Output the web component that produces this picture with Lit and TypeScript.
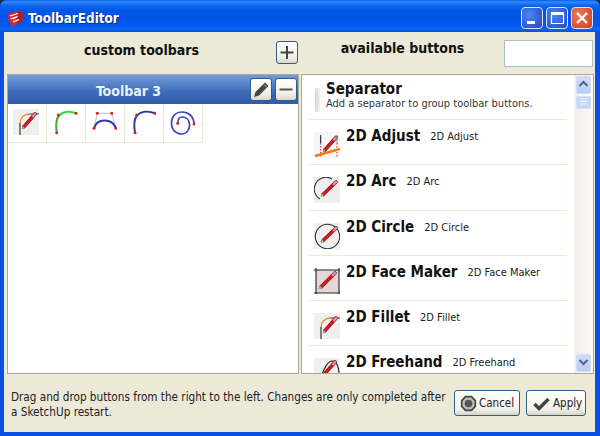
import { LitElement, html, css, svg } from 'lit';
import { customElement } from 'lit/decorators.js';

// pencil drawn from the tip (x1,y1) to the eraser end (x2,y2)
const pencil = (x1: number, y1: number, x2: number, y2: number) => {
  const mx = x1 + (x2 - x1) * 0.14;
  const my = y1 + (y2 - y1) * 0.14;
  const ex = x1 + (x2 - x1) * 0.86;
  const ey = y1 + (y2 - y1) * 0.86;
  return svg`
    <line x1=${mx} y1=${my} x2=${x2} y2=${y2} stroke="#6b2a2a" stroke-width="3.7" stroke-linecap="round" />
    <line x1=${mx} y1=${my} x2=${ex} y2=${ey} stroke="#e0141e" stroke-width="2.5" />
    <line x1=${ex} y1=${ey} x2=${x2} y2=${y2} stroke="#e58ab0" stroke-width="2.5" stroke-linecap="round" />
    <line x1=${x1} y1=${y1} x2=${mx} y2=${my} stroke="#b9b06a" stroke-width="1.8" />
  `;
};

const tile = (fill = '#efefef') => svg`<rect width="26" height="26" fill=${fill} />`;
const dot = (x: number, y: number) => svg`<circle cx=${x} cy=${y} r="1.5" fill="#d81e2a" />`;

const icon = (body: unknown) => html`<svg class="icon" viewBox="0 0 26 26">${body}</svg>`;

const filletIcon = () => svg`
  ${tile()}
  <path d="M7 26V14" stroke="#222" stroke-width="1.1" fill="none" />
  <path d="M7 14C7 9 11 5.5 16 5" stroke="#f08a1c" stroke-width="1.3" fill="none" />
  <path d="M16 5H26" stroke="#444" stroke-width="1.1" fill="none" />
  ${pencil(9, 20, 22, 5)}
`;

const greenArc = () => svg`
  <path d="M4.7 23.7C3.5 15 4.5 9.5 7 6.5" stroke="#2fb52f" stroke-width="2" fill="none" />
  <path d="M7 6.5C11 2.5 18 1.5 24 4.3" stroke="#35d835" stroke-width="2" fill="none" />
  ${dot(4.7, 23.7)}${dot(6.3, 6)}${dot(24, 4.3)}
`;

const bezier = () => svg`
  <path d="M3 19.3L6.3 4.3H20.7L25 19.3" stroke="#bbb" stroke-width="0.9" fill="none" />
  <path d="M3 19.3C6 9 21 9 25 19.3" stroke="#3238b0" stroke-width="2" fill="none" />
  ${dot(3, 19.3)}${dot(25, 19.3)}${dot(6.3, 4.3)}${dot(20.7, 4.3)}
`;

const blueArc = () => svg`
  <path d="M5 23.7C3.5 15 4.5 9.5 7 6.5C11 2.5 18 1.5 25 4.3" stroke="#3238b0" stroke-width="2" fill="none" />
  ${dot(5, 23.7)}${dot(6.7, 6)}${dot(25, 4.3)}
`;

const spiral = () => svg`
  <path d="M25 15C25 7 19 3 13 3C6 3 2.5 8 2.5 14C2.5 21 7 25 13 25C18 25 21 20 20.5 15C20 10.5 17 8 13.5 8C10 8 8.7 11 8.7 14.3"
    stroke="#4048b8" stroke-width="1.7" fill="none" />
  ${dot(8.7, 14.3)}${dot(25, 15)}
`;

const adjustIcon = () => svg`
  ${tile('#f6f6f6')}
  <path d="M6.7 3V11" stroke="#222" stroke-width="1.1" />
  <path d="M23 3V11" stroke="#999" stroke-width="1.1" />
  <path d="M6.7 11V26M23 11V26" stroke="#d8141e" stroke-width="1" stroke-dasharray="1.5 1.5" />
  <path d="M1 24L26 17" stroke="#f47a10" stroke-width="2.4" />
  ${pencil(9, 20, 22, 5.5)}
`;

const arcIcon = () => svg`
  ${tile()}
  <path d="M6 22A11.5 11.5 0 0 1 18 2" stroke="#333" stroke-width="1.1" fill="none" />
  ${pencil(7, 19.5, 22, 5)}
`;

const circleIcon = () => svg`
  ${tile()}
  <circle cx="13.5" cy="13.5" r="12.2" stroke="#333" stroke-width="1.1" fill="none" />
  ${pencil(7, 19.5, 22, 5)}
`;

const faceIcon = () => svg`
  <rect x="2" y="2" width="23" height="23" fill="#e2d6d6" />
  <path d="M0 2H26M0 25H26M2 0V26M25 0V26" stroke="#222" stroke-width="1.1" />
  ${pencil(5, 21, 21, 5)}
`;

const freehandIcon = () => svg`
  ${tile()}
  <path d="M5 24C9 14 12 4 18 3C23 3 25 10 25 16" stroke="#222" stroke-width="1.1" fill="none" />
  ${pencil(8, 19, 21, 4)}
`;

const buttons = [
  { name: '2D Adjust', draw: adjustIcon },
  { name: '2D Arc', draw: arcIcon },
  { name: '2D Circle', draw: circleIcon },
  { name: '2D Face Maker', draw: faceIcon },
  { name: '2D Fillet', draw: filletIcon },
  { name: '2D Freehand', draw: freehandIcon },
];

const toolbarIcons = [filletIcon, greenArc, bezier, blueArc, spiral];

@customElement('app-root')
export class AppRoot extends LitElement {
  static styles = css`
    :host {
      display: block;
      width: 600px;
      height: 436px;
      background: #1a2a5a;
      font-family: 'DejaVu Sans Condensed', 'DejaVu Sans', sans-serif;
      color: #111;
      overflow: hidden;
    }
    .window {
      height: 100%;
      box-sizing: border-box;
      display: flex;
      flex-direction: column;
      border-radius: 7px 7px 0 0;
      background: #0a50e0;
      overflow: hidden;
    }
    .titlebar {
      height: 32px;
      flex: none;
      box-sizing: border-box;
      padding: 4px 7px 0 7px;
      display: flex;
      align-items: center;
      background: linear-gradient(
        #0a5be8 0,
        #2f8dfb 2px,
        #1069ee 5px,
        #0058e6 10px,
        #0055e5 50%,
        #0058ee 78%,
        #0a66f5 90%,
        #0a50d8 100%
      );
    }
    .logo {
      width: 17px;
      height: 17px;
      margin-right: 4px;
    }
    .caption {
      flex: 1;
      color: #fff;
      font: bold 13.4px 'DejaVu Sans Condensed', 'DejaVu Sans', sans-serif;
      text-shadow: 1px 1px 1px #0a2a90;
    }
    .winbtn {
      width: 22px;
      height: 22px;
      margin-left: 3px;
      box-sizing: border-box;
      border: 1px solid #d8e4fb;
      border-radius: 4px;
      background: radial-gradient(circle at 35% 35%, #4d86ee, #2a56d8 75%, #2048c4);
      display: block;
    }
    .winbtn.close {
      background: radial-gradient(circle at 35% 35%, #ea7a56, #d9502c 70%, #c4401e);
    }
    .winbtn svg {
      display: block;
    }
    .frame {
      flex: 1;
      display: flex;
      flex-direction: column;
      margin: 0 5px 4px 4px;
      background: #ece9d8;
      padding: 0 1px 0 3px;
      min-height: 0;
    }
    .heads {
      height: 42px;
      flex: none;
      display: grid;
      grid-template-columns: 292px 295px;
      column-gap: 0;
    }
    .head {
      display: flex;
      align-items: center;
    }
    .head.right {
      padding-left: 2px;
    }
    .head h2 {
      flex: 1;
      margin: 0 0 7px;
      text-align: center;
      font-size: 14px;
      font-weight: bold;
    }
    .head.right h2 {
      margin-bottom: 11px;
    }
    .head input {
      width: 89px;
      height: 27px;
      margin: 0 1px 0 0;
      box-sizing: border-box;
      border: 1px solid #a9bdd2;
      background: #fff;
      padding: 0;
      outline: none;
    }
    .tool {
      width: 22px;
      height: 23px;
      box-sizing: border-box;
      border: 1px solid #2e5f8a;
      border-radius: 3px;
      background: linear-gradient(#fff, #f2f0e6 70%, #dcd8c6);
      padding: 0;
      display: block;
    }
    .tool svg {
      display: block;
      width: 20px;
      height: 21px;
    }
    .head .tool {
      margin: 0 1px 1px 0;
    }
    .panels {
      height: 300px;
      flex: none;
      display: grid;
      grid-template-columns: 292px 293px;
      column-gap: 2px;
    }
    .panel {
      box-sizing: border-box;
      border: 1px solid #aca899;
      background: #fff;
      min-height: 0;
      overflow: hidden;
      display: flex;
      flex-direction: column;
    }
    .panel.right {
      flex-direction: row;
    }
    .bar {
      height: 29px;
      flex: none;
      box-sizing: border-box;
      padding: 2px 1px 3px 0;
      display: flex;
      align-items: center;
      gap: 3px;
      background: linear-gradient(#759cd8, #3f6fbc 55%, #2c5ba8);
    }
    .bar span {
      flex: 1;
      padding: 3px 0 0 2px;
      text-align: center;
      color: #e9f2ff;
      font-size: 14px;
      font-weight: bold;
    }
    .cells {
      display: flex;
    }
    .cell {
      width: 39px;
      height: 39px;
      box-sizing: border-box;
      padding: 5px 0 0 5px;
      border-right: 1px solid #ece9d8;
      border-bottom: 1px solid #ece9d8;
    }
    .icon {
      width: 26px;
      height: 26px;
      display: block;
      flex: none;
    }
    .list {
      flex: 1;
      min-width: 0;
      padding: 0 7px 0 6px;
      overflow: hidden;
    }
    .sep {
      height: 45px;
      box-sizing: border-box;
      padding: 6px 0 0 18px;
      position: relative;
      border-bottom: 1px solid #ece9d8;
    }
    .grip {
      position: absolute;
      left: 7px;
      top: 13px;
      width: 5px;
      height: 24px;
      border-radius: 2px;
      background: linear-gradient(90deg, #d4d4d0, #f2f2ee);
    }
    .sep b {
      display: block;
      font-size: 15px;
      line-height: 17px;
    }
    .sep small {
      display: block;
      font-size: 11px;
      line-height: 12px;
      color: #333;
    }
    .row {
      height: 45.3px;
      box-sizing: border-box;
      padding: 12px 0 0 6px;
      display: flex;
      align-items: flex-start;
      border-bottom: 1px solid #ece9d8;
    }
    .row b {
      margin: -5px 0 0 6px;
      font-size: 15px;
      line-height: 18px;
    }
    .row small {
      margin: -3px 0 0 10px;
      font-size: 11px;
      line-height: 16px;
      color: #222;
    }
    .scroll {
      width: 19px;
      flex: none;
      box-sizing: border-box;
      padding: 1px 2px 0;
      display: flex;
      flex-direction: column;
      background: linear-gradient(90deg, #f0eee4, #fbfaf6);
    }
    .arrow {
      height: 16px;
      flex: none;
      border: 1px solid #d3def6;
      border-radius: 2px;
      background: linear-gradient(#cfdcfb, #b8ccf7);
      display: block;
    }
    .arrow svg,
    .thumb svg {
      display: block;
      margin: auto;
    }
    .arrow.down {
      margin-top: auto;
      margin-bottom: 1px;
    }
    .thumb {
      height: 11px;
      flex: none;
      margin-top: 2px;
      border: 1px solid #d3def6;
      border-radius: 2px;
      background: #c6d6fa;
    }
    .foot {
      flex: 1;
      display: flex;
      align-items: flex-start;
      padding: 16px 8px 0 4px;
    }
    .foot p {
      flex: 1;
      margin: 0;
      font-size: 11.65px;
      line-height: 15px;
      color: #222;
    }
    .btn {
      height: 26px;
      flex: none;
      box-sizing: border-box;
      border: 1px solid #2e5f8a;
      border-radius: 3px;
      background: linear-gradient(#fff, #f4f2e8 75%, #d9d5c4);
      display: flex;
      align-items: center;
      padding: 0;
      font: 11.5px 'DejaVu Sans Condensed', 'DejaVu Sans', sans-serif;
      color: #222;
      margin-left: 6px;
    }
    .btn.cancel {
      width: 66px;
      margin-left: 7px;
      padding-left: 5px;
      gap: 2px;
    }
    .btn.apply {
      width: 60px;
      padding-left: 6px;
      gap: 3px;
    }
  `;

  render() {
    return html`
      <div class="window">
        <div class="titlebar">
          <svg class="logo" viewBox="0 0 17 17">
            <path d="M1 4L10 1L16 3L15 12L6 16L2 13Z" fill="#d8282c" />
            <path d="M10 1L16 3L15 12L10 14Z" fill="#b81c22" />
            <path d="M3 6L11 3.5M3.5 9L10.5 6.5L6 8.8M6 12L12 9.6" stroke="#fff" stroke-width="1.3" fill="none" />
          </svg>
          <span class="caption">ToolbarEditor</span>
          <div class="winbtn">
            <svg width="20" height="20"><rect x="5" y="13" width="8" height="3" fill="#fff" /></svg>
          </div>
          <div class="winbtn">
            <svg width="20" height="20">
              <path d="M4.5 6.5H16.5V15.5H4.5ZM4 4.5H17" stroke="#fff" stroke-width="1.2" fill="none" />
              <rect x="4" y="4" width="13" height="2.4" fill="#fff" />
            </svg>
          </div>
          <div class="winbtn close">
            <svg width="20" height="20">
              <path d="M5 5L15 15M15 5L5 15" stroke="#fff" stroke-width="2.2" />
            </svg>
          </div>
        </div>
        <div class="frame">
          <div class="heads">
            <div class="head">
              <h2>custom toolbars</h2>
              <button class="tool" aria-label="add">
                <svg viewBox="0 0 20 21"><path d="M10 4V17M3.5 10.5H16.5" stroke="#444" stroke-width="2" /></svg>
              </button>
            </div>
            <div class="head right">
              <h2>available buttons</h2>
              <input type="text" />
            </div>
          </div>
          <div class="panels">
            <div class="panel">
              <div class="bar">
                <span>Toolbar 3</span>
                <button class="tool" aria-label="rename">
                  <svg viewBox="0 0 20 21">
                    <path d="M3 18L4.5 13L14 3.5L17.5 7L8 16.5Z" fill="#444" />
                    <path d="M13 5.5L15.5 8" stroke="#ddd" stroke-width="0.8" />
                  </svg>
                </button>
                <button class="tool" aria-label="remove">
                  <svg viewBox="0 0 20 21"><path d="M3.5 10.5H16.5" stroke="#555" stroke-width="2" /></svg>
                </button>
              </div>
              <div class="cells">
                ${toolbarIcons.map((draw) => html`<div class="cell">${icon(draw())}</div>`)}
              </div>
            </div>
            <div class="panel right">
              <div class="list">
                <div class="sep">
                  <div class="grip"></div>
                  <b>Separator</b>
                  <small>Add a separator to group toolbar buttons.</small>
                </div>
                ${buttons.map(
                  (b) => html`
                    <div class="row">
                      ${icon(b.draw())}
                      <b>${b.name}</b>
                      <small>${b.name}</small>
                    </div>
                  `
                )}
              </div>
              <div class="scroll">
                <div class="arrow">
                  <svg width="13" height="14"><path d="M2.5 9L6.5 5L10.5 9" stroke="#4d6185" stroke-width="2" fill="none" /></svg>
                </div>
                <div class="thumb">
                  <svg width="13" height="9"><path d="M3 2H10M3 4.5H10M3 7H10" stroke="#eef3ff" stroke-width="1" /></svg>
                </div>
                <div class="arrow down">
                  <svg width="13" height="14"><path d="M2.5 5L6.5 9L10.5 5" stroke="#4d6185" stroke-width="2" fill="none" /></svg>
                </div>
              </div>
            </div>
          </div>
          <div class="foot">
            <p>Drag and drop buttons from the right to the left. Changes are only completed after a SketchUp restart.</p>
            <button class="btn cancel">
              <svg width="17" height="17" viewBox="0 0 20 20">
                <path d="M6.5 2H13.5L18 6.5V13.5L13.5 18H6.5L2 13.5V6.5Z" fill="#bbb" stroke="#444" stroke-width="2" />
                <circle cx="10" cy="10" r="4.5" fill="#555" />
              </svg>
              Cancel
            </button>
            <button class="btn apply">
              <svg width="17" height="15" viewBox="0 0 17 15">
                <path d="M1.5 8L6 12.5L15.5 3" stroke="#444" stroke-width="3.4" fill="none" />
              </svg>
              Apply
            </button>
          </div>
        </div>
      </div>
    `;
  }
}
